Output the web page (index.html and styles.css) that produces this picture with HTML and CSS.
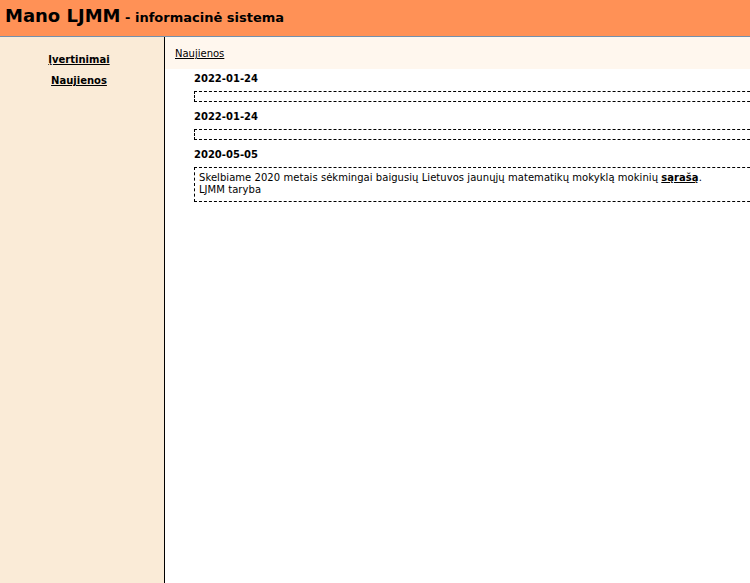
FILE: index.html
```html
<!DOCTYPE html>
<html lang="lt">
<head>
<meta charset="utf-8">
<title>Mano LJMM</title>
<link rel="stylesheet" href="styles.css">
</head>
<body>
<header class="top">
  <span class="brand">Mano LJMM</span><span class="sub"> - informacinė sistema</span>
</header>
<div class="layout">
  <nav class="side">
    <a href="#" class="side-link">Įvertinimai</a>
    <a href="#" class="side-link">Naujienos</a>
  </nav>
  <main class="main">
    <div class="crumbs"><a href="#" class="crumb">Naujienos</a></div>
    <div class="news">
      <div class="item">
        <div class="date">2022-01-24</div>
        <div class="box empty"></div>
      </div>
      <div class="item">
        <div class="date">2022-01-24</div>
        <div class="box empty"></div>
      </div>
      <div class="item">
        <div class="date">2020-05-05</div>
        <div class="box">Skelbiame 2020 metais sėkmingai baigusių Lietuvos jaunųjų matematikų mokyklą mokinių <a href="#" class="strong-link">sąrašą</a>.<br>LJMM taryba</div>
      </div>
    </div>
  </main>
</div>
</body>
</html>
```
FILE: styles.css
```css
html, body {
  margin: 0;
  padding: 0;
  height: 100%;
}
body {
  font-family: "DejaVu Sans", Verdana, sans-serif;
  font-size: 10px;
  color: #000;
  background: #fff;
  display: flex;
  flex-direction: column;
  overflow: hidden;
}
.top {
  background: #ff9156;
  border-bottom: 1px solid #7390ad;
  height: 37px;
  box-sizing: border-box;
  padding: 5px 0 0 5px;
  white-space: nowrap;
}
.brand {
  font-size: 18px;
  font-weight: bold;
}
.sub {
  font-size: 13px;
  font-weight: bold;
}
.layout {
  flex: 1;
  display: flex;
}
.side {
  width: 165px;
  flex: none;
  background: #faebd7;
  border-right: 1px solid #000;
  display: flex;
  flex-direction: column;
  align-items: center;
  padding: 16px 6px 0 0;
  box-sizing: border-box;
  gap: 8px;
}
.side-link {
  color: #000;
  font-weight: bold;
  font-size: 10px;
  line-height: 13px;
}
.main {
  flex: 1;
  overflow: hidden;
}
.crumbs {
  background: #fff7ee;
  height: 32px;
  box-sizing: border-box;
  padding: 11px 0 0 10px;
}
.crumb {
  color: #000;
  font-size: 10px;
}
.news {
  padding: 3px 0 0 29px;
}
.item {
  margin-bottom: 8px;
}
.date {
  font-weight: bold;
  font-size: 10px;
  line-height: 13px;
  margin-bottom: 6px;
}
.box {
  border: 1px dashed #000;
  margin-right: -40px;
  padding: 4px 4px 5px;
  line-height: 12px;
  letter-spacing: 0.05px;
}
.box.empty {
  height: 1px;
  padding: 4px 4px;
}
.strong-link {
  color: #000;
  font-weight: bold;
}
```
